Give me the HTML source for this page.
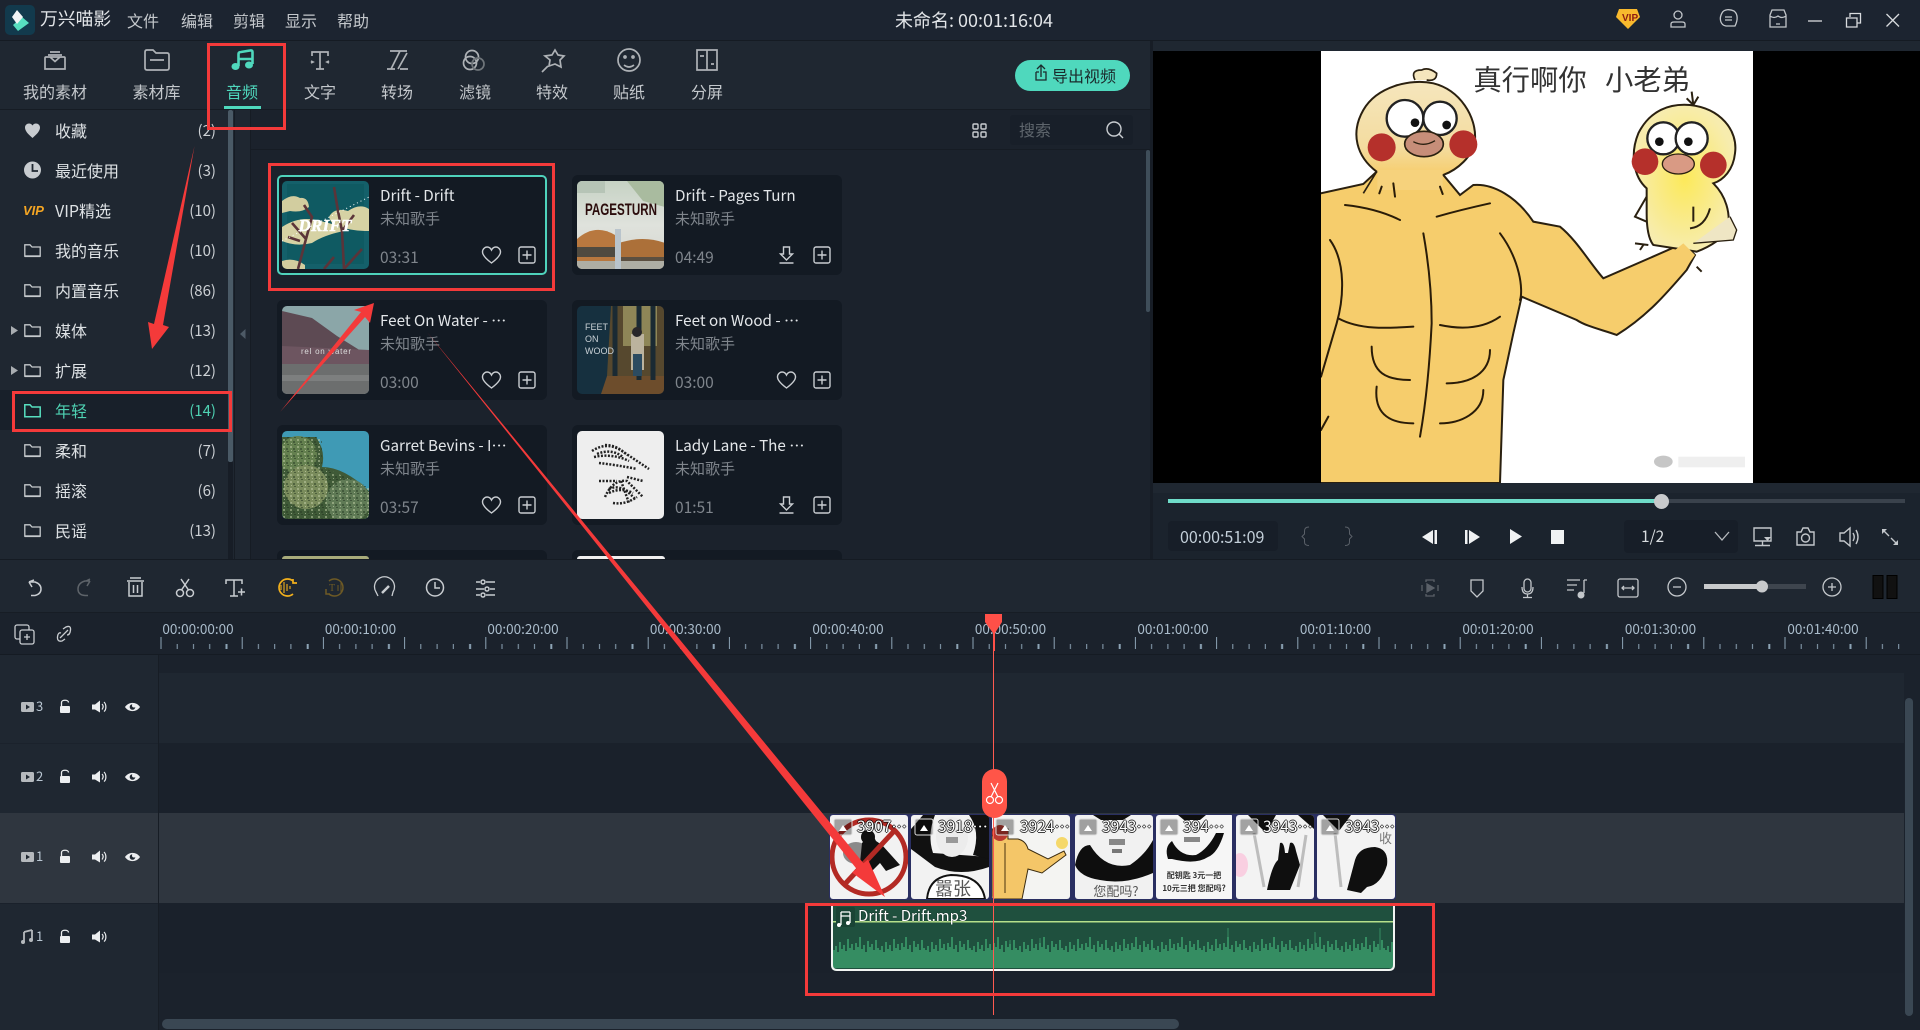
<!DOCTYPE html>
<html lang="zh"><head><meta charset="utf-8"><title>万兴喵影</title>
<style>
html,body{margin:0;padding:0;background:#1f2731}
#r{position:relative;width:1920px;height:1030px;overflow:hidden;background:#1f2731;font-family:"Noto Sans CJK SC","Liberation Sans",sans-serif;color:#dfe3e6}
.b{position:absolute}
.t{position:absolute;white-space:nowrap;line-height:1}
.c{transform:translateX(-50%)}
svg{position:absolute;left:0;top:0}
.m{font-size:16px;color:#c4c8cc;top:12px}
.l{font-size:16px;color:#c4c8cc;top:83px}
.s{font-size:16px;color:#dde1e4;left:55px}
.n{font-size:15px;color:#cdd1d5;right:1704px}
.h{font-size:15.2px;color:#e4e7ea}
.u{font-size:15px;color:#7f858c}
.d{font-size:15.5px;color:#7f858c}
.k{font-size:13.5px;color:#aabccb;top:622px;width:120px;text-align:center}
.q{font-size:15.5px;color:#fff;top:819px;text-shadow:1px 0 0 rgba(0,0,0,.75),-1px 0 0 rgba(0,0,0,.75),0 1px 0 rgba(0,0,0,.75),0 -1px 0 rgba(0,0,0,.75)}
.v{font-size:13px;color:#b9c6d2}
</style></head><body><div id="r">
<!-- backgrounds -->
<div class="b" style="left:0;top:0;width:1920px;height:40px;background:#1c2430;border-bottom:1px solid #151b23"></div>
<div class="b" style="left:0;top:109px;width:1150px;height:1px;background:#161c24"></div>
<div class="b" style="left:250px;top:110px;width:900px;height:449px;background:#1b222c"></div>
<div class="b" style="left:250px;top:149px;width:900px;height:1px;background:#161c24"></div>
<div class="b" style="left:234px;top:110px;width:1px;height:449px;background:#161c24"></div>
<div class="b" style="left:250px;top:110px;width:1px;height:449px;background:#161c24"></div>
<div class="b" style="left:0;top:390px;width:228px;height:40px;background:#18202a"></div>
<div class="b" style="left:228px;top:110px;width:5px;height:449px;background:#171d26"></div>
<div class="b" style="left:228px;top:110px;width:5px;height:352px;background:#4a5a66;border-radius:2px"></div>
<div class="b" style="left:0;top:559px;width:1920px;height:1px;background:#151b23"></div>
<div class="b" style="left:1015px;top:60px;width:115px;height:31px;border-radius:16px;background:#4fd8bd"></div>
<div class="b" style="left:1010px;top:115px;width:123px;height:30px;background:#181f29;border-radius:3px"></div>
<div class="b" style="left:1146px;top:150px;width:4px;height:162px;background:#3f4e5a;border-radius:2px"></div>
<!-- preview -->
<div class="b" style="left:1150px;top:41px;width:3px;height:518px;background:#171d26"></div>
<div class="b" style="left:1153px;top:51px;width:767px;height:432px;background:#000"></div>
<div class="b" style="left:1153px;top:493px;width:767px;height:66px;background:#1b232d"></div>
<div class="b" style="left:1168px;top:499px;width:737px;height:4px;background:#3a424c"></div>
<div class="b" style="left:1168px;top:499px;width:493px;height:4px;background:#6fdcc9"></div>
<div class="b" style="left:1654px;top:494px;width:15px;height:15px;border-radius:50%;background:#c8cacc"></div>
<div class="b" style="left:1168px;top:521px;width:110px;height:30px;border-radius:4px;background:#171e28"></div>
<div class="b" style="left:1624px;top:520px;width:114px;height:33px;border-radius:4px;background:#171e28"></div>
<!-- timeline -->
<div class="b" style="left:0;top:612px;width:1920px;height:42px;background:#1b222c;border-top:1px solid #171d25;box-sizing:border-box"></div>
<div class="b" style="left:0;top:654px;width:1920px;height:1px;background:#151b23"></div>
<div class="b" style="left:158px;top:655px;width:1762px;height:18px;background:#1b222c"></div>
<div class="b" style="left:158px;top:673px;width:1762px;height:70px;background:#1f2731"></div>
<div class="b" style="left:158px;top:743px;width:1762px;height:70px;background:#1a212b"></div>
<div class="b" style="left:0;top:813px;width:1920px;height:90px;background:#2f363f"></div>
<div class="b" style="left:158px;top:903px;width:1762px;height:70px;background:#1a212b"></div>
<div class="b" style="left:158px;top:973px;width:1762px;height:57px;background:#1b222c"></div>
<div class="b" style="left:158px;top:655px;width:1px;height:375px;background:#171d25"></div>
<div class="b" style="left:0;top:743px;width:158px;height:1px;background:#1b222c"></div>
<div class="b" style="left:0;top:903px;width:158px;height:1px;background:#1a212b"></div>
<div class="b" style="left:162px;top:1019px;width:1017px;height:10px;border-radius:5px;background:#3a4753"></div>
<div class="b" style="left:1904px;top:655px;width:16px;height:375px;background:#1b222c"></div>
<div class="b" style="left:1905px;top:698px;width:8px;height:318px;border-radius:4px;background:#3a4753"></div>
<!-- cards -->
<div class="b" style="left:277px;top:175px;width:270px;height:100px;background:#131a23;border-radius:5px;box-sizing:border-box;border:2px solid #4fd3bc"></div>
<div class="b" style="left:572px;top:175px;width:270px;height:100px;background:#131a23;border-radius:6px"></div>
<div class="b" style="left:277px;top:300px;width:270px;height:100px;background:#131a23;border-radius:6px"></div>
<div class="b" style="left:572px;top:300px;width:270px;height:100px;background:#131a23;border-radius:6px"></div>
<div class="b" style="left:277px;top:425px;width:270px;height:100px;background:#131a23;border-radius:6px"></div>
<div class="b" style="left:572px;top:425px;width:270px;height:100px;background:#131a23;border-radius:6px"></div>
<div class="b" style="left:277px;top:550px;width:270px;height:9px;background:#131a23;border-radius:6px 6px 0 0"></div>
<div class="b" style="left:572px;top:550px;width:270px;height:9px;background:#131a23;border-radius:6px 6px 0 0"></div>
<div class="b" style="left:282px;top:556px;width:87px;height:3px;background:#a8ab7a;border-radius:4px 4px 0 0"></div>
<div class="b" style="left:577px;top:556px;width:88px;height:3px;background:#eeeeee;border-radius:4px 4px 0 0"></div>

<svg width="1920" height="1030" viewBox="0 0 1920 1030" fill="none">
<defs>
<clipPath id="th"><rect width="87" height="88" rx="5"/></clipPath>
<clipPath id="cl"><rect width="78" height="84" rx="3"/></clipPath>
<clipPath id="pv"><rect x="63" y="33" width="1296" height="1296"/></clipPath>
<linearGradient id="hd" x1="0" y1="0" x2="0" y2="1"><stop offset="0" stop-color="#f5e6bd"/><stop offset=".7" stop-color="#f4dc9f"/><stop offset="1" stop-color="#f6cd6c"/></linearGradient>
<radialGradient id="cb"><stop offset="0" stop-color="#fce95a"/><stop offset="1" stop-color="#f7ecae"/></radialGradient>
<linearGradient id="pg" x1="0" y1="0" x2="0" y2="1"><stop offset="0" stop-color="#c6d2c4"/><stop offset=".5" stop-color="#dfe2dc"/><stop offset="1" stop-color="#d5d6d0"/></linearGradient>
<pattern id="sp" width="7" height="7" patternUnits="userSpaceOnUse"><rect x="1" y="1" width="2" height="2" fill="#c3cfa7"/><rect x="4" y="3" width="2" height="2" fill="#263a22"/><rect x="2" y="5" width="1" height="1" fill="#e1e8c6"/><rect x="5" y="6" width="2" height="1" fill="#1e2f1c"/></pattern>
<symbol id="heart" overflow="visible"><path d="M0 8C-4 5-9 1-9-3C-9-6-6.5-8-4.5-8C-2.5-8-1-7 0-5C1-7 2.5-8 4.5-8C6.5-8 9-6 9-3C9 1 4 5 0 8Z" stroke="#c9cdd1" stroke-width="1.4"/></symbol>
<symbol id="plus" overflow="visible"><rect x="-8" y="-8" width="16" height="16" rx="2" stroke="#c9cdd1" stroke-width="1.4"/><path d="M-4.5 0H4.5M0-4.5V4.5" stroke="#c9cdd1" stroke-width="1.4"/></symbol>
<symbol id="dl" overflow="visible"><path d="M-3-8H3V-1H6L0 5-6-1H-3ZM-7 8H7" stroke="#c9cdd1" stroke-width="1.4"/></symbol>
<symbol id="fo" overflow="visible"><path d="M.8 12.2V.8H6L8 3H16.2V12.2Z" stroke="#c6cacd" stroke-width="1.3"/><path d="M.8 12.2H16.2" stroke="#c6cacd" stroke-width="1.8"/></symbol>
<symbol id="lock" overflow="visible"><rect x="-5" y="-1" width="10" height="7" rx="1" fill="#eceef0"/><path d="M-3.5-1V-4.5C-3.5-7.5 3.5-7.5 3.5-4.5" stroke="#eceef0" stroke-width="1.3"/></symbol>
<symbol id="spk" overflow="visible"><path d="M-7-2.5H-4L1-6.5V5.5L-4 2.5H-7Z" fill="#eceef0"/><path d="M3-3C4.5-1.5 4.5.5 3 2.500M5-5C7.500-2.500 7.500 2.500 5 4.500" stroke="#eceef0" stroke-width="1.200"/></symbol>
<symbol id="eye" overflow="visible"><path d="M-7.500 0C-4-5.500 4-5.500 7.500 0C4 5.500-4 5.500-7.500 0Z" fill="#eceef0"/><circle cx="0" cy="0" r="2.800" fill="#1f2731"/><circle cx="1.500" cy="-1.500" r="2" fill="#eceef0"/></symbol>
<symbol id="vid" overflow="visible"><rect x="-6.500" y="-5" width="13" height="10" rx="1.500" fill="#b5b9bd"/><path d="M-1.500-2.500V2.500L2.500 0Z" fill="#1f2731"/></symbol>
<symbol id="ic" overflow="visible"><rect x="0" y="0" width="18" height="16" rx="2" fill="#00000055" stroke="#ddd" stroke-width="1"/><path d="M5 12L9 6 13 12Z" fill="#fff"/></symbol>
<pattern id="tk" x="160.500" y="637" width="81.200" height="12" patternUnits="userSpaceOnUse"><rect width="1" height="12" fill="#8da4b6"/><rect x="16.200" y="7" width="1" height="5" fill="#8da4b6"/><rect x="32.500" y="7" width="1" height="5" fill="#8da4b6"/><rect x="48.700" y="7" width="1" height="5" fill="#8da4b6"/><rect x="65" y="7" width="2" height="5" fill="#8da4b6"/></pattern>
<pattern id="wv" x="833" y="930" width="46" height="38" patternUnits="userSpaceOnUse"><path d="M0 38V20H2V16H4V22H6V12H8V19H10V15H12V21H14V9H16V18H18V14H20V20H22V13H24V17H26V7H28V19H30V15H32V22H34V11H36V17H38V14H40V20H42V10H44V18H46V38Z" fill="#358d62"/></pattern>
</defs>

<!-- logo -->
<rect x="5" y="5" width="30" height="30" rx="5" fill="#123a4d"/>
<path d="M22 17L29 23 18 31 13 25Z" fill="#57dfc0"/><path d="M17 10L23 17 17 24 12 17Z" fill="#f2f4f5"/>

<!-- top right icons -->
<path d="M1628 9L1637 9 1640 17 1628 29 1616 17 1619 9Z" fill="#f8b92d"/>
<g stroke="#c2c6ca" stroke-width="1.300">
<circle cx="1678" cy="15" r="4"/><path d="M1671 27V24Q1671 22 1674 22H1682Q1685 22 1685 24V27Z"/>
<path d="M1735 26C1738 20 1738 14 1734 11C1730 9 1724 9 1722 13C1719 18 1720 25 1726 26Z"/><path d="M1725 17H1732M1725 20H1732"/>
<path d="M1770 27V15L1772 10H1784L1786 15V27ZM1770 16Q1774 19 1778 16Q1782 19 1786 16M1776 24H1780"/>
</g>
<path d="M1808 21H1822" stroke="#d8dbde" stroke-width="1.300"/>
<path d="M1846.500 18H1857V27H1846.500ZM1850 17V13.500H1860.500V23H1857" stroke="#d8dbde" stroke-width="1.300"/>
<path d="M1886.500 14L1899 26.500M1899 14L1886.500 26.500" stroke="#d8dbde" stroke-width="1.300"/>

<!-- tab icons -->
<g stroke="#aeb2b6" stroke-width="1.700">
<path d="M46 57H64Q65 57 65 58V69H45V58Q45 57 46 57ZM50 52H60M48 55H62M50 57L55 61.500 60 57"/>
<path d="M145 52Q145 50 147 50H153L156 53H167Q169 53 169 55V68Q169 70 167 70H147Q145 70 145 68ZM150 60H164"/>
<path d="M312 56V52H328V56M320 52V69M316 69H324M311 61L313 62 311 63M329 61L327 62 329 63"/>
<path d="M390 51H407M400 51L391 69M407 53L398 69M387 69H395M400 69H408" />
<circle cx="472" cy="57" r="6.500"/><circle cx="470" cy="63" r="6.500"/><circle cx="478" cy="64" r="6" stroke="#6f757a"/>
<path d="M555 50L558 55 564 56 560 60 561 67 555 64 549 66 550 60 545 56 552 55ZM548 66L542 72" />
<circle cx="629" cy="60" r="11"/><path d="M624 65Q629 69 634 65"/><circle cx="625" cy="57" r="1"/><circle cx="633" cy="57" r="1"/>
<path d="M697 50H717V70H697ZM707 50V70M700 56H704M711 64H714"/>
</g>
<g fill="#4fd8bd"><ellipse cx="235.500" cy="66.500" rx="4" ry="3.500"/><ellipse cx="249" cy="65" rx="4" ry="3.500"/></g>
<path d="M238.500 66V54Q238.500 52 241 52L250 50.500Q252.500 50 252.500 52V64M239 59H252" stroke="#4fd8bd" stroke-width="2.600"/>
<!-- export icon -->
<path d="M1036 72V80H1046V72H1043M1039 72H1036M1041 77V66M1037 69L1041 65 1045 69" stroke="#1b2a2c" stroke-width="1.300"/>
<!-- list toolbar -->
<g stroke="#c9cdd1" stroke-width="1.400">
<rect x="973" y="124" width="5" height="5" rx="1"/><rect x="981" y="124" width="5" height="5" rx="1"/><rect x="973" y="132" width="5" height="5" rx="1"/><rect x="981" y="132" width="5" height="5" rx="1"/>
<circle cx="1114" cy="129" r="7"/><path d="M1119 134L1123 138"/></g>

<!-- sidebar icons -->
<path d="M32.500 138C28 134 25 131 25 127.500C25 125 27 123.500 29 123.500C30.500 123.500 31.700 124.300 32.500 125.500C33.300 124.300 34.500 123.500 36 123.500C38 123.500 40 125 40 127.500C40 131 37 134 32.500 138Z" fill="#c8ccd0"/>
<circle cx="32.500" cy="170" r="8.500" fill="#c8ccd0"/><path d="M32.500 164V171H38" stroke="#1f2731" stroke-width="1.800"/>
<use href="#fo" x="24" y="244"/><use href="#fo" x="24" y="284"/><use href="#fo" x="24" y="324"/><use href="#fo" x="24" y="364"/>
<g><use href="#fo" x="24" y="444"/><use href="#fo" x="24" y="484"/><use href="#fo" x="24" y="524"/></g>
<path d="M24.800 416.800V404.800H30L32 407H40.200V416.800ZM24.800 416.800H40.200" stroke="#57dfc0" stroke-width="1.500"/>
<path d="M11 326L18 330.500 11 335ZM11 366L18 370.500 11 375Z" fill="#a9adb1"/>
<path d="M245.500 329V339L240 334Z" fill="#4d5a66"/>

<!-- thumbs -->
<g transform="translate(282,181)"><g clip-path="url(#th)"><rect width="87" height="88" fill="#14606a"/><rect x="5" y="3" width="77" height="80" fill="#0f5a62"/>
<path d="M0 20Q10 12 18 17Q26 16 27 26Q20 32 8 30L0 32Z" fill="#d2cd9f"/><path d="M47 36Q52 26 66 30Q78 22 87 28V50Q70 50 60 46Q50 46 47 36Z" fill="#d6d2a4"/><path d="M0 46Q18 34 38 40Q58 44 62 50Q42 54 30 62Q14 66 0 60Z" fill="#d6d2a4"/><path d="M0 80Q12 76 23 84V88H0Z" fill="#d2cd9f"/>
<path d="M16 88L24 58 10 42M24 58L30 36 22 24M62 88L60 50 56 30 52 6M60 50L72 34M62 88L80 68M42 88L52 76M18 60L6 56" stroke="#5b3439" stroke-width="2.600"/><path d="M0 60L87 16" stroke="#fff" stroke-width="1" stroke-dasharray="1 3"/>
<text x="43" y="50" text-anchor="middle" font-family="Liberation Serif" font-size="17" font-weight="700" font-style="italic" fill="#fff" stroke="#fff" stroke-width=".4" textLength="53">DRIFT</text></g></g>
<g transform="translate(577,181)"><g clip-path="url(#th)"><rect width="88" height="88" fill="url(#pg)"/><path d="M50 0H88V26L66 20Z" fill="#a9bb9f"/><path d="M0 0H28V12H0Z" fill="#b6c4b6"/>
<path d="M0 58Q18 42 38 54L42 80H0Z" fill="#b8783f"/><path d="M42 62Q66 54 88 62V82H42Z" fill="#ac7039"/><rect y="66" width="42" height="10" fill="#4f4a40"/><rect x="44" y="76" width="44" height="5" fill="#5b4f40"/><rect y="80" width="88" height="8" fill="#aeaea4"/><rect x="38" y="48" width="6" height="40" fill="#b9c4cc"/>
<text x="44" y="34" text-anchor="middle" font-family="Liberation Sans" font-size="17" font-weight="700" fill="#2b0c0c" textLength="72" lengthAdjust="spacingAndGlyphs">PAGESTURN</text></g></g>
<g transform="translate(282,306)"><g clip-path="url(#th)"><rect width="87" height="88" fill="#8ba6a8"/><path d="M0 5L30 12 55 30 87 50V58H0Z" fill="#5d4a53"/><path d="M0 40L87 44V60H0Z" fill="#6d5560"/><rect y="58" width="87" height="30" fill="#6c6e6e"/><path d="M0 72H87" stroke="#7d7f7f" stroke-width="6"/>
<text x="44" y="48" text-anchor="middle" font-family="Liberation Sans" font-size="8" fill="#ddd" textLength="50">rel on water</text></g></g>
<g transform="translate(577,306)"><g clip-path="url(#th)"><rect width="88" height="88" fill="#16303f"/><path d="M34 0H88V70H30Z" fill="#56482e"/><path d="M46 0H80V40H46Z" fill="#8e8657"/><path d="M30 70H88V88H24Z" fill="#6d4d2c"/><path d="M38 0V70M62 0V74M76 0V74" stroke="#1a2a33" stroke-width="5"/><rect x="54" y="28" width="13" height="36" fill="#bcb39e"/><circle cx="60" cy="26" r="5" fill="#28272a"/><rect x="56" y="48" width="9" height="22" fill="#2c4b60"/>
<text x="8" y="24" font-family="Liberation Sans" font-size="9" fill="#c9d1d6">FEET</text><text x="8" y="36" font-family="Liberation Sans" font-size="9" fill="#c9d1d6">ON</text><text x="8" y="48" font-family="Liberation Sans" font-size="9" fill="#c9d1d6">WOOD</text></g></g>
<g transform="translate(282,431)"><g clip-path="url(#th)"><rect width="87" height="88" fill="#3f9ab5"/><path d="M0 6H34Q44 20 40 36Q62 36 87 60V88H0Z" fill="#3f5a37"/><circle cx="16" cy="24" r="19" fill="#64804f"/><circle cx="24" cy="56" r="22" fill="#7a8c5c"/><circle cx="66" cy="70" r="22" fill="#5f7a55"/><path d="M0 6H40V36L87 56V88H0Z" fill="url(#sp)" opacity=".5"/></g></g>
<g transform="translate(577,431)"><g clip-path="url(#th)"><rect width="88" height="88" fill="#eeeeee"/><g stroke="#222" stroke-width="2.500" stroke-dasharray="2 1.500"><path d="M15 20Q30 10 45 20L72 38M17 26Q35 22 52 30M22 32Q40 34 60 38M28 14Q40 14 50 24M20 23Q34 17 46 26"/><path d="M28 66Q36 48 50 50L66 66M32 62Q44 56 56 62M36 72Q48 74 60 66M44 50L52 72M22 50H40M50 46L66 50M32 58Q44 52 58 68"/></g></g></g>
<g>
<use href="#heart" x="491.500" y="255"/><use href="#plus" x="527" y="255"/>
<use href="#dl" x="786.500" y="255"/><use href="#plus" x="822" y="255"/>
<use href="#heart" x="491.500" y="380"/><use href="#plus" x="527" y="380"/>
<use href="#heart" x="786.500" y="380"/><use href="#plus" x="822" y="380"/>
<use href="#heart" x="491.500" y="505"/><use href="#plus" x="527" y="505"/>
<use href="#dl" x="786.500" y="505"/><use href="#plus" x="822" y="505"/>
</g>

<!-- preview image -->
<g transform="translate(1300,40) scale(.33333)" clip-path="url(#pv)">
<rect x="63" y="33" width="1296" height="1296" fill="#fff"/>
<path d="M63 460L190 432 230 395 430 405 480 465 520 435C580 430 650 470 700 545L780 560C830 600 870 670 910 715L1150 610 1185 645 1160 690C1100 760 1040 830 950 885C910 870 860 860 830 840L665 770 640 880 610 1020 600 1329H30V460Z" fill="#f6cd6c" stroke="#2a2010" stroke-width="6"/>
<path d="M230 395C170 350 150 280 190 210C230 140 330 115 400 130C480 150 530 230 525 300C520 350 470 390 430 405Z" fill="url(#hd)" stroke="#2a2010" stroke-width="6"/>
<path d="M230 395L190 460M430 405L480 465" stroke="#2a2010" stroke-width="5"/>
<rect x="232" y="390" width="196" height="60" fill="#f6d27c"/>
<path d="M345 120Q330 90 365 90Q385 80 410 100Q410 125 380 120" fill="#f5e6bd" stroke="#2a2010" stroke-width="5"/>
<circle cx="315" cy="235" r="55" fill="#fff" stroke="#222" stroke-width="7"/><circle cx="420" cy="235" r="50" fill="#fff" stroke="#222" stroke-width="7"/><circle cx="345" cy="248" r="13" fill="#111"/><circle cx="440" cy="255" r="13" fill="#111"/>
<circle cx="245" cy="322" r="42" fill="#b5302b"/><circle cx="490" cy="313" r="42" fill="#b5302b"/><ellipse cx="372" cy="312" rx="58" ry="38" fill="#c78e79" stroke="#2a2010" stroke-width="5"/><path d="M340 305Q372 322 405 302" stroke="#2a2010" stroke-width="4"/>
<g stroke="#2a1c08" stroke-width="6" stroke-linecap="round">
<path d="M135 495Q230 505 300 540M410 530Q480 510 570 490M370 580Q395 720 395 850Q385 1050 360 1190M115 835C180 870 260 865 340 860M420 855C490 870 550 865 600 830M215 920C215 1000 260 1020 330 1020M570 930C570 1000 510 1030 440 1030M230 1040C220 1130 280 1150 340 1150M550 1050C550 1120 480 1150 420 1150M90 600C140 670 130 780 110 850L63 1010M600 580C660 660 670 750 660 780M245 440L238 460M280 430L285 470M420 440L428 462M63 1170L85 1130"/>
</g>
<path d="M1040 445C1000 410 990 340 1015 280C1050 210 1110 190 1170 195C1260 205 1315 270 1305 340C1300 390 1270 420 1240 430C1280 470 1290 520 1285 560C1280 590 1230 620 1190 635L1060 615C1040 590 1040 540 1040 520Z" fill="url(#cb)" stroke="#2a2010" stroke-width="6"/>
<path d="M1180 610L1300 600 1310 570 1290 530" stroke="#2a2010" stroke-width="4" fill="#efe6c4"/>
<path d="M1150 610L1185 645 1160 680 1100 650Z" fill="#f6cd6c"/>
<path d="M1175 155L1180 195M1195 170L1180 195M1160 175L1180 195" stroke="#2a2010" stroke-width="6"/>
<circle cx="1090" cy="295" r="48" fill="#fff" stroke="#222" stroke-width="7"/><circle cx="1175" cy="295" r="48" fill="#fff" stroke="#222" stroke-width="7"/><circle cx="1078" cy="305" r="13" fill="#111"/><circle cx="1165" cy="305" r="13" fill="#111"/>
<circle cx="1035" cy="365" r="40" fill="#b5302b"/><circle cx="1240" cy="375" r="40" fill="#b5302b"/><ellipse cx="1135" cy="372" rx="48" ry="30" fill="#d99a84" stroke="#2a2010" stroke-width="4"/>
<path d="M1040 470L1005 530 1040 545M1230 505Q1215 560 1170 565M1180 500V545M1005 610L1045 615M1020 630L1030 615M1190 680L1205 695" stroke="#2a2010" stroke-width="6"/>
<text x="520" y="150" font-family="Noto Sans CJK SC" font-size="85" fill="#333">真行啊你</text>
<text x="915" y="150" font-family="Noto Sans CJK SC" font-size="85" fill="#333">小老弟</text>
<ellipse cx="1090" cy="1265" rx="28" ry="18" fill="#c6c6c6"/><rect x="1135" y="1250" width="200" height="32" fill="#efefef"/>
</g>

<!-- player icons -->
<g fill="#f0f2f3">
<path d="M1433 530V544L1422 537ZM1434.500 530H1437V544H1434.500Z"/>
<path d="M1465 530H1467.500V544H1465ZM1469 530V544L1480 537Z"/>
<path d="M1510 529V544L1522 536.500Z"/>
<rect x="1551" y="530" width="13" height="14"/>
</g>
<path d="M1309 527Q1304.500 527 1304.500 531V534L1302 536.500 1304.500 539V542Q1304.500 545.500 1309 545.500M1345 527Q1349.500 527 1349.500 531V534L1352 536.500 1349.500 539V542Q1349.500 545.500 1345 545.500" stroke="#5a6068" stroke-width="1"/>
<path d="M1715 532L1722 540 1729 532" stroke="#b6babe" stroke-width="1.300"/>
<g stroke="#c3c7cb" stroke-width="1.400">
<path d="M1754 528H1771V541H1754ZM1762.500 541V545M1755 545.500H1770"/>
<path d="M1797 532H1801L1803 528H1808L1810 532H1814V545H1797Z"/><circle cx="1805.500" cy="538" r="4"/>
<path d="M1840 533H1844L1850 528V546L1844 541H1840ZM1853 533Q1855.500 537 1853 541M1856 530Q1860 537 1856 544"/>
<path d="M1883 530L1889 536M1897 544L1891 538"/>
</g>
<path d="M1882 529H1887L1882 534ZM1898 545H1893L1898 540Z" fill="#c3c7cb"/>
<path d="M1764 537H1771L1767.500 541Z" fill="#c3c7cb"/>

<!-- timeline toolbar left -->
<g stroke="#c9cdd1" stroke-width="1.500">
<path d="M29 582L34 580M29 582L32 587M29.500 582H35Q41 584 41 589T35 595.500H31"/>
<path stroke="#5e646a" d="M90 579L86 581M90 581L87 586M90 581H85Q78 583 78 589T85 595.500H88"/>
<path d="M127 581H144M130 578H141M129 582V596H142V582M133.500 585V593M137.500 585V593"/>
<circle cx="180" cy="593" r="3.500"/><circle cx="190" cy="593" r="3.500"/><path d="M181.500 590L189 579M188.500 590L181 579"/>
<path d="M226 584V580H242V584M234 580V596H230M234 596H238M238 592H245M241.500 588.500V595.500"/>
<path d="M378 596L376 592A10 10 0 1 1 393 592L392 596" stroke-width="1.300"/><path d="M382 593L389 586" stroke-width="2.500"/>
<circle cx="435" cy="587.500" r="8.500"/><path d="M435 582V588H440"/>
<path d="M476 582H480M486 582H495M476 589H484M490 589H495M476 595H480M486 595H495"/><circle cx="483" cy="582" r="2"/><circle cx="487" cy="589" r="2"/><circle cx="483" cy="595" r="2"/>
</g>
<g stroke="#f2b01c" stroke-width="1.700"><path d="M293 581A8.500 8.500 0 1 0 293 594M293 579V583H297"/><path d="M281 585V590M284 582V593M287 584V591M290 586V589" stroke-width="1.100"/></g>
<g stroke="#6e5a25" stroke-width="1.500"><path d="M329 581A8.500 8.500 0 1 1 329 594"/><path d="M326 589V594H330"/><text x="329" y="591" font-size="10" fill="#6e5a25" stroke="none" font-family="Liberation Serif">T</text><path d="M338 585V591M341 583V592" stroke-width="1"/></g>
<!-- timeline toolbar right -->
<g stroke="#5a6068" stroke-width="1.300"><path d="M1426 582V580H1434V582M1426 594V596H1434V594M1422 585V591M1438 585V591"/><path d="M1427 584V592L1434 588Z" fill="#5a6068"/></g>
<g stroke="#c3c7cb" stroke-width="1.300">
<path d="M1471 580H1483V591L1477 597 1471 591Z"/>
<rect x="1524" y="579" width="7" height="13" rx="3.500"/><path d="M1522 587Q1522 594 1527.500 594T1533 587M1527.500 594V597M1523 597.500H1532"/>
<path d="M1567 580H1580M1567 585H1577M1567 590H1574M1584 580V593M1584 580H1587"/>
<rect x="1618" y="579" width="20" height="18" rx="2"/><path d="M1622 588H1634M1624 586L1622 588 1624 590M1632 586L1634 588 1632 590"/>
<circle cx="1677" cy="587" r="9"/><path d="M1673 587H1681"/>
<circle cx="1832" cy="587" r="9"/><path d="M1828 587H1836M1832 583V591"/>
</g>
<circle cx="1581" cy="595" r="3.500" fill="#c3c7cb"/>
<rect x="1704" y="584" width="102" height="5" fill="#3e454e"/><rect x="1704" y="584" width="58" height="5" fill="#c8cacc"/><circle cx="1762" cy="586.500" r="6" fill="#c8cacc"/>
<rect x="1873" y="575.500" width="10" height="23" fill="#111" stroke="#000"/><rect x="1887" y="575.500" width="10" height="23" fill="#111" stroke="#000"/>
<path d="M1884 575V599" stroke="#1f2731"/>

<!-- ruler -->
<rect x="160" y="637" width="1745" height="12" fill="url(#tk)"/>
<g stroke="#c9cdd1" stroke-width="1.300"><rect x="15" y="625" width="14" height="14" rx="2"/><rect x="20" y="630" width="14" height="14" rx="2" fill="#1b222c"/><path d="M24 637H30M27 634V640"/>
<path d="M63 629L66 627Q71 625 70.500 630T67 635M65 639L62 641Q57 642 57.500 637T61 633M60 638L68 630"/></g>

<!-- track heads -->
<use href="#vid" x="27.500" y="707"/><use href="#lock" x="65" y="707"/><use href="#spk" x="99" y="707"/><use href="#eye" x="132.500" y="707"/>
<use href="#vid" x="27.500" y="777"/><use href="#lock" x="65" y="777"/><use href="#spk" x="99" y="777"/><use href="#eye" x="132.500" y="777"/>
<use href="#vid" x="27.500" y="857"/><use href="#lock" x="65" y="857"/><use href="#spk" x="99" y="857"/><use href="#eye" x="132.500" y="857"/>
<path d="M24 932V942M32 930V940M24 932L32 930" stroke="#b5b9bd" stroke-width="1.800"/><circle cx="23" cy="942" r="2" fill="#b5b9bd"/><circle cx="31" cy="940" r="2" fill="#b5b9bd"/>
<use href="#lock" x="65" y="937"/><use href="#spk" x="99" y="937"/>

<!-- clips -->
<rect x="829" y="814" width="567" height="86" rx="3" fill="#2a2f62"/>
<g transform="translate(830,815)"><g clip-path="url(#cl)"><rect width="78" height="84" fill="#f2f2f2"/><ellipse cx="26" cy="38" rx="13" ry="11" fill="#8a8a8a"/><path d="M32 28L42 18 46 26 52 30 70 50 56 56 50 48 40 58 30 48Z" fill="#111"/><circle cx="38" cy="22" r="7" fill="#111"/><circle cx="39" cy="42" r="37" stroke="#b32a24" stroke-width="5" fill="none"/><path d="M14 70L66 14" stroke="#b32a24" stroke-width="5"/></g></g>
<g transform="translate(911,815)"><g clip-path="url(#cl)"><rect width="78" height="84" fill="#f2f2f2"/><path d="M0 14L12 0H24Q16 20 22 38L78 42V52Q50 62 24 52L0 34Z" fill="#111"/><path d="M58 0H78V44L62 40Q70 16 58 0Z" fill="#111"/><ellipse cx="41" cy="22" rx="16" ry="20" fill="#ececec"/><rect x="35" y="22" width="12" height="6" fill="#999"/><path d="M16 84Q18 62 40 60Q70 60 74 84Z" fill="#fff" stroke="#111" stroke-width="2"/><text x="42" y="80" text-anchor="middle" font-family="Noto Sans CJK SC" font-size="18" fill="#555">嚣张</text></g></g>
<g transform="translate(992,815)"><g clip-path="url(#cl)"><rect width="78" height="84" fill="#f4f4f2"/><path d="M0 14H16V24H26Q34 26 36 34L56 44 72 36 74 40 50 58 36 54 30 84H0Z" fill="#f4c668" stroke="#3a2b10"/><circle cx="8" cy="18" r="8" fill="#b83a30"/><circle cx="70" cy="28" r="6" fill="#f5d86a"/><path d="M13 28V78" stroke="#4a3410"/></g></g>
<g transform="translate(1075,815)"><g clip-path="url(#cl)"><rect width="78" height="84" fill="#f1f1f1"/><path d="M0 50Q4 30 15 30Q30 55 55 50Q70 40 78 25V58Q50 70 25 65Q5 62 0 50Z" fill="#0e0e0e"/><path d="M18 0H56L48 5H26Z" fill="#0e0e0e"/><rect x="34" y="24" width="16" height="6" fill="#888"/><rect x="37" y="34" width="10" height="4" fill="#777"/><text x="41" y="81" text-anchor="middle" font-family="Noto Sans CJK SC" font-size="13" fill="#555">您配吗?</text></g></g>
<g transform="translate(1156,815)"><g clip-path="url(#cl)"><rect width="76" height="84" fill="#f6f6f6"/><path d="M12 44Q8 32 16 26Q24 42 40 40Q52 34 60 18L68 18Q62 38 52 42Q40 50 16 44Z" fill="#0e0e0e"/><path d="M22 0H50L44 5H28Z" fill="#0e0e0e"/><rect x="28" y="22" width="16" height="5" fill="#888"/><text x="38" y="63" text-anchor="middle" font-family="Noto Sans CJK SC" font-size="8" font-weight="700" fill="#333">配钥匙 3元一把</text><text x="38" y="76" text-anchor="middle" font-family="Noto Sans CJK SC" font-size="8" font-weight="700" fill="#333">10元三把 您配吗?</text></g></g>
<g transform="translate(1236,815)"><g clip-path="url(#cl)"><rect width="78" height="84" fill="#f3f3f3"/><path d="M12 0H40L30 18Z" fill="#0f0f0f"/><path d="M62 0H78V14Z" fill="#0f0f0f"/><path d="M31 75Q36 50 42 45L44 28Q48 26 49 38H52L54 28Q58 26 60 36L64 50 54 75Z" fill="#0f0f0f"/><ellipse cx="4" cy="50" rx="8" ry="12" fill="#f9cfe1"/><path d="M18 18L28 72M70 20L62 72" stroke="#bdbdbd" stroke-width="3"/></g></g>
<g transform="translate(1317,815)"><g clip-path="url(#cl)"><rect width="78" height="84" fill="#f3f3f3"/><path d="M6 0H34L22 16Z" fill="#0f0f0f"/><path d="M30 75L38 45Q42 32 58 32Q72 34 70 50Q64 70 50 72L44 78Z" fill="#0f0f0f"/><path d="M18 18L24 72" stroke="#bdbdbd" stroke-width="3"/><text x="62" y="28" font-family="Noto Sans CJK SC" font-size="13" fill="#777">收</text></g></g>
<g>
<use href="#ic" x="834" y="819"/><use href="#ic" x="915" y="819"/><use href="#ic" x="996" y="819"/><use href="#ic" x="1079" y="819"/><use href="#ic" x="1160" y="819"/><use href="#ic" x="1240" y="819"/><use href="#ic" x="1321" y="819"/>
</g>

<!-- audio clip -->
<path d="M831 905H1395V965Q1395 971 1389 971H837Q831 971 831 965Z" fill="#1f503e"/>
<rect x="833" y="935" width="560" height="33" fill="url(#wv)"/>
<path d="M1228 968V928M1380 968V928M1040 968V938M1010 968V940M1315 968V932" stroke="#358d62"/>
<rect x="833" y="921" width="560" height="1.500" fill="#b6e08b"/>
<path d="M832 905V965Q832 970 837 970H1389Q1394 970 1394 965V905" stroke="#f2f5f3" stroke-width="2"/>
<rect x="836" y="907" width="19" height="20" rx="2" fill="#1a4435"/>
<path d="M841 912H850M841 912V925M850 912V923M841 916H850" stroke="#fff" stroke-width="1.300"/><circle cx="839" cy="925" r="2" fill="#fff"/><circle cx="848" cy="923" r="2" fill="#fff"/>
</svg>

<!-- text -->
<div class="t" style="left:40px;top:10px;font-size:17.800px;color:#e2e5e8">万兴喵影</div>
<div class="t m" style="left:127px">文件</div><div class="t m" style="left:181px">编辑</div><div class="t m" style="left:233px">剪辑</div><div class="t m" style="left:285px">显示</div><div class="t m" style="left:337px">帮助</div>
<div class="t" style="left:895px;top:11px;font-size:18px;color:#e2e5e8">未命名: 00:01:16:04</div>
<div class="t" style="left:1622px;top:14px;font-size:10px;font-weight:700;color:#8e1c10;font-family:'Liberation Sans',sans-serif">VIP</div>
<div class="t l c" style="left:55px">我的素材</div><div class="t l c" style="left:156.500px">素材库</div><div class="t l c" style="left:242px;color:#4fd8bd">音频</div><div class="t l c" style="left:320px">文字</div><div class="t l c" style="left:397px">转场</div><div class="t l c" style="left:475px">滤镜</div><div class="t l c" style="left:552px">特效</div><div class="t l c" style="left:629px">贴纸</div><div class="t l c" style="left:707px">分屏</div>
<div class="b" style="left:224px;top:106px;width:37px;height:3px;background:#4fd8bd"></div>
<div class="t" style="left:1052px;top:67px;font-size:16px;color:#1b2a2c">导出视频</div>
<div class="t" style="left:1019px;top:121px;font-size:16px;color:#5e656c">搜索</div>

<div class="t s" style="top:122px">收藏</div><div class="t n" style="top:123px">(2)</div>
<div class="t s" style="top:162px">最近使用</div><div class="t n" style="top:163px">(3)</div>
<div class="t" style="left:23px;top:204px;font-size:13px;font-weight:700;font-style:italic;color:#f5a623;font-family:'Liberation Sans',sans-serif">VIP</div>
<div class="t s" style="top:202px">VIP精选</div><div class="t n" style="top:203px">(10)</div>
<div class="t s" style="top:242px">我的音乐</div><div class="t n" style="top:243px">(10)</div>
<div class="t s" style="top:282px">内置音乐</div><div class="t n" style="top:283px">(86)</div>
<div class="t s" style="top:322px">媒体</div><div class="t n" style="top:323px">(13)</div>
<div class="t s" style="top:362px">扩展</div><div class="t n" style="top:363px">(12)</div>
<div class="t s" style="top:402px;color:#4ed1b2">年轻</div><div class="t n" style="top:403px;color:#4ed1b2">(14)</div>
<div class="t s" style="top:442px">柔和</div><div class="t n" style="top:443px">(7)</div>
<div class="t s" style="top:482px">摇滚</div><div class="t n" style="top:483px">(6)</div>
<div class="t s" style="top:522px">民谣</div><div class="t n" style="top:523px">(13)</div>

<div class="t h" style="left:380px;top:188px">Drift - Drift</div><div class="t u" style="left:380px;top:211px">未知歌手</div><div class="t d" style="left:380px;top:250px">03:31</div>
<div class="t h" style="left:675px;top:188px">Drift - Pages Turn</div><div class="t u" style="left:675px;top:211px">未知歌手</div><div class="t d" style="left:675px;top:250px">04:49</div>
<div class="t h" style="left:380px;top:313px">Feet On Water - …</div><div class="t u" style="left:380px;top:336px">未知歌手</div><div class="t d" style="left:380px;top:375px">03:00</div>
<div class="t h" style="left:675px;top:313px">Feet on Wood - …</div><div class="t u" style="left:675px;top:336px">未知歌手</div><div class="t d" style="left:675px;top:375px">03:00</div>
<div class="t h" style="left:380px;top:438px">Garret Bevins - I…</div><div class="t u" style="left:380px;top:461px">未知歌手</div><div class="t d" style="left:380px;top:500px">03:57</div>
<div class="t h" style="left:675px;top:438px">Lady Lane - The …</div><div class="t u" style="left:675px;top:461px">未知歌手</div><div class="t d" style="left:675px;top:500px">01:51</div>

<div class="t" style="left:1180px;top:528px;font-size:16px;color:#c4d0da">00:00:51:09</div>
<div class="t" style="left:1641px;top:529px;font-size:15.500px;color:#d8dcdf">1/2</div>

<div class="t k c" style="left:198px">00:00:00:00</div><div class="t k c" style="left:360.500px">00:00:10:00</div><div class="t k c" style="left:523px">00:00:20:00</div><div class="t k c" style="left:685.500px">00:00:30:00</div><div class="t k c" style="left:848px">00:00:40:00</div><div class="t k c" style="left:1010.500px">00:00:50:00</div><div class="t k c" style="left:1173px">00:01:00:00</div><div class="t k c" style="left:1335.500px">00:01:10:00</div><div class="t k c" style="left:1498px">00:01:20:00</div><div class="t k c" style="left:1660.500px">00:01:30:00</div><div class="t k c" style="left:1823px">00:01:40:00</div>

<div class="t v" style="left:36px;top:699px">3</div><div class="t v" style="left:36px;top:769px">2</div><div class="t v" style="left:36px;top:849px">1</div><div class="t v" style="left:36px;top:929px">1</div>

<div class="t q" style="left:857px">3907…</div><div class="t q" style="left:938px">3918…</div><div class="t q" style="left:1020px">3924…</div><div class="t q" style="left:1102px">3943…</div><div class="t q" style="left:1183px">394…</div><div class="t q" style="left:1263px">3943…</div><div class="t q" style="left:1345px">3943…</div>
<div class="t" style="left:858px;top:908px;font-size:15px;color:#fff;text-shadow:0 0 1px #000">Drift - Drift.mp3</div>

<!-- overlays -->
<svg width="1920" height="1030" viewBox="0 0 1920 1030" fill="none">
<path d="M993.500 651V1015" stroke="#ff5a50" stroke-width="1"/>
<path d="M985 614H1002V622L995 633V651H993V633L985 622Z" fill="#ff5048"/>
<rect x="982" y="769" width="25" height="49" rx="12.500" fill="#ff5548"/>
<g stroke="#fff" stroke-width="1.200"><circle cx="990" cy="800" r="3.500"/><circle cx="999" cy="800" r="3.500"/><path d="M991 797L998 783M998 797L991 783"/></g>
<g fill="#f43a3a">
<path d="M194.500 146L163 325 169 327 152 349 148 322 154 324Z" />
<path d="M280 412L361 312 354 310 374 303 370 323 365 317Z"/>
<path d="M427 332L863.500 863.200 868 859.500 885 897 852 872.500 856.500 868.800Z"/>
</g>
<g stroke="#f43a3a" stroke-width="3">
<rect x="208.500" y="44.500" width="76" height="84"/>
<rect x="269.500" y="164.500" width="284" height="125"/>
<rect x="13.500" y="392.500" width="217" height="38"/>
<rect x="806.500" y="904.500" width="627" height="90"/>
</g>
</svg>
</div></body></html>
